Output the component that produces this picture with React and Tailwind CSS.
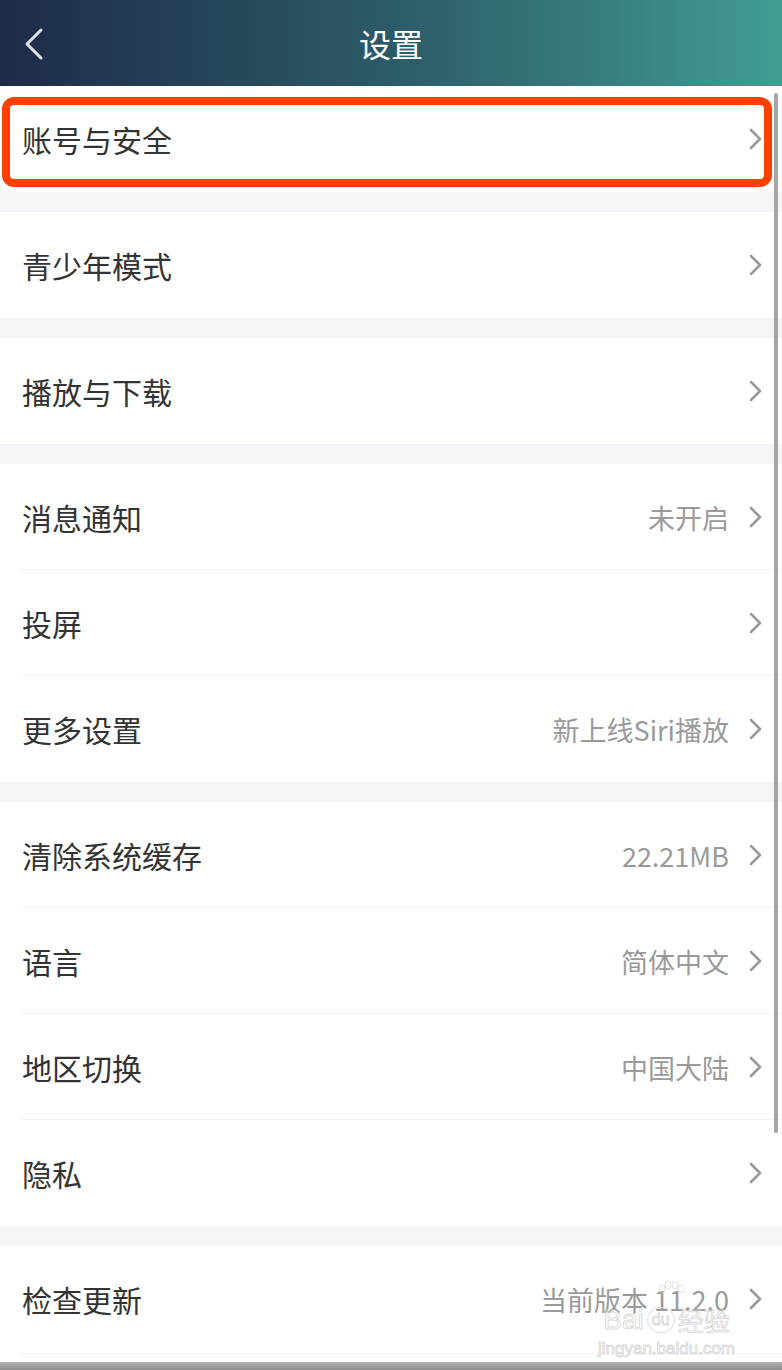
import React from "react";

const groups = [
  [{ label: "账号与安全" }],
  [{ label: "青少年模式" }],
  [{ label: "播放与下载" }],
  [
    { label: "消息通知", value: "未开启" },
    { label: "投屏" },
    { label: "更多设置", value: "新上线Siri播放" },
  ],
  [
    { label: "清除系统缓存", value: "22.21MB" },
    { label: "语言", value: "简体中文" },
    { label: "地区切换", value: "中国大陆" },
    { label: "隐私" },
  ],
  [{ label: "检查更新", value: "当前版本 11.2.0" }],
];

const Chevron = () => (
  <svg width="14" height="22" viewBox="0 0 14 22" fill="none">
    <path d="M2 2 L11 11 L2 20" stroke="#9a9a9a" strokeWidth="2.6" strokeLinecap="round" strokeLinejoin="round" />
  </svg>
);

const Row = ({ item, last }) => (
  <div className="relative flex h-[106px] items-center pl-[22px] pr-[19px] bg-white">
    <span className="text-[30px] text-[#333333] leading-none">{item.label}</span>
    <div className="ml-auto flex items-center gap-[20px]">
      {item.value && <span className="text-[27px] text-[#9a9a9a] leading-none">{item.value}</span>}
      <Chevron />
    </div>
    {!last && <div className="absolute bottom-0 left-[22px] right-0 h-px bg-[#f3f3f3]" />}
  </div>
);

export default function App() {
  return (
    <div className="relative w-[782px] h-[1370px] overflow-hidden bg-white font-['Noto_Sans_CJK_SC','Noto_Sans',sans-serif]">
      {/* Header */}
      <header className="relative flex h-[86px] items-center justify-center bg-gradient-to-r from-[#1e2b49] via-[#2c5b68] to-[#419d92]">
        <svg className="absolute left-[22px] top-[26px]" width="24" height="36" viewBox="0 0 24 36" fill="none">
          <path d="M19 4 L5 18 L19 32" stroke="#dfe4ea" strokeWidth="3" strokeLinecap="round" strokeLinejoin="round" />
        </svg>
        <h1 className="text-[32px] text-white leading-none">设置</h1>
      </header>

      {/* List */}
      <div className="flex flex-col gap-[20px] bg-[#f4f5f8]">
        {groups.map((g, gi) => (
          <div key={gi} className="flex flex-col">
            {g.map((item, i) => (
              <Row key={item.label} item={item} last={i === g.length - 1} />
            ))}
          </div>
        ))}
      </div>

      {/* bottom divider + bar */}
      <div className="absolute left-[22px] right-0 top-[1353px] h-px bg-[#f3f3f3]" />
      <div className="absolute left-0 right-0 bottom-0 h-[8px] bg-gradient-to-b from-[#b0b0b0] to-[#8e8e8e]" />

      {/* Highlight box */}
      <div className="absolute left-[2px] top-[97px] w-[770px] h-[90px] rounded-[12px] border-[8px] border-[#ff4000]" />

      {/* Scrollbar */}
      <div className="absolute left-[774px] top-[93px] w-[4px] h-[1040px] rounded-full bg-[#a6a6a6]" />

      {/* Watermark */}
      <svg className="absolute left-[656px] top-[1281px] opacity-70 pointer-events-none" width="30" height="22" viewBox="0 0 30 22" fill="none" stroke="#d4d4d4" strokeWidth="1">
        <ellipse cx="6" cy="8" rx="3" ry="4" />
        <ellipse cx="12" cy="4" rx="3" ry="4" />
        <ellipse cx="19" cy="4" rx="3" ry="4" />
        <ellipse cx="25" cy="8" rx="3" ry="4" />
      </svg>
      <div className="absolute left-[598px] top-[1306px] flex flex-col items-center opacity-80 pointer-events-none">
        <div className="flex items-center gap-[3px] text-[28px] leading-none font-['Liberation_Sans',sans-serif] text-transparent [-webkit-text-stroke:1px_#d4d4d4]">
          <span>Bai</span>
          <span className="flex h-[26px] w-[28px] items-center justify-center rounded-full border border-[#d4d4d4] text-[16px]">du</span>
          <span className="font-['Noto_Sans_CJK_SC',sans-serif] text-[26px]">经验</span>
        </div>
        <span className="mt-[6px] text-[17px] leading-none font-['Liberation_Sans',sans-serif] text-transparent [-webkit-text-stroke:1px_#d4d4d4]">jingyan.baidu.com</span>
      </div>
    </div>
  );
}
